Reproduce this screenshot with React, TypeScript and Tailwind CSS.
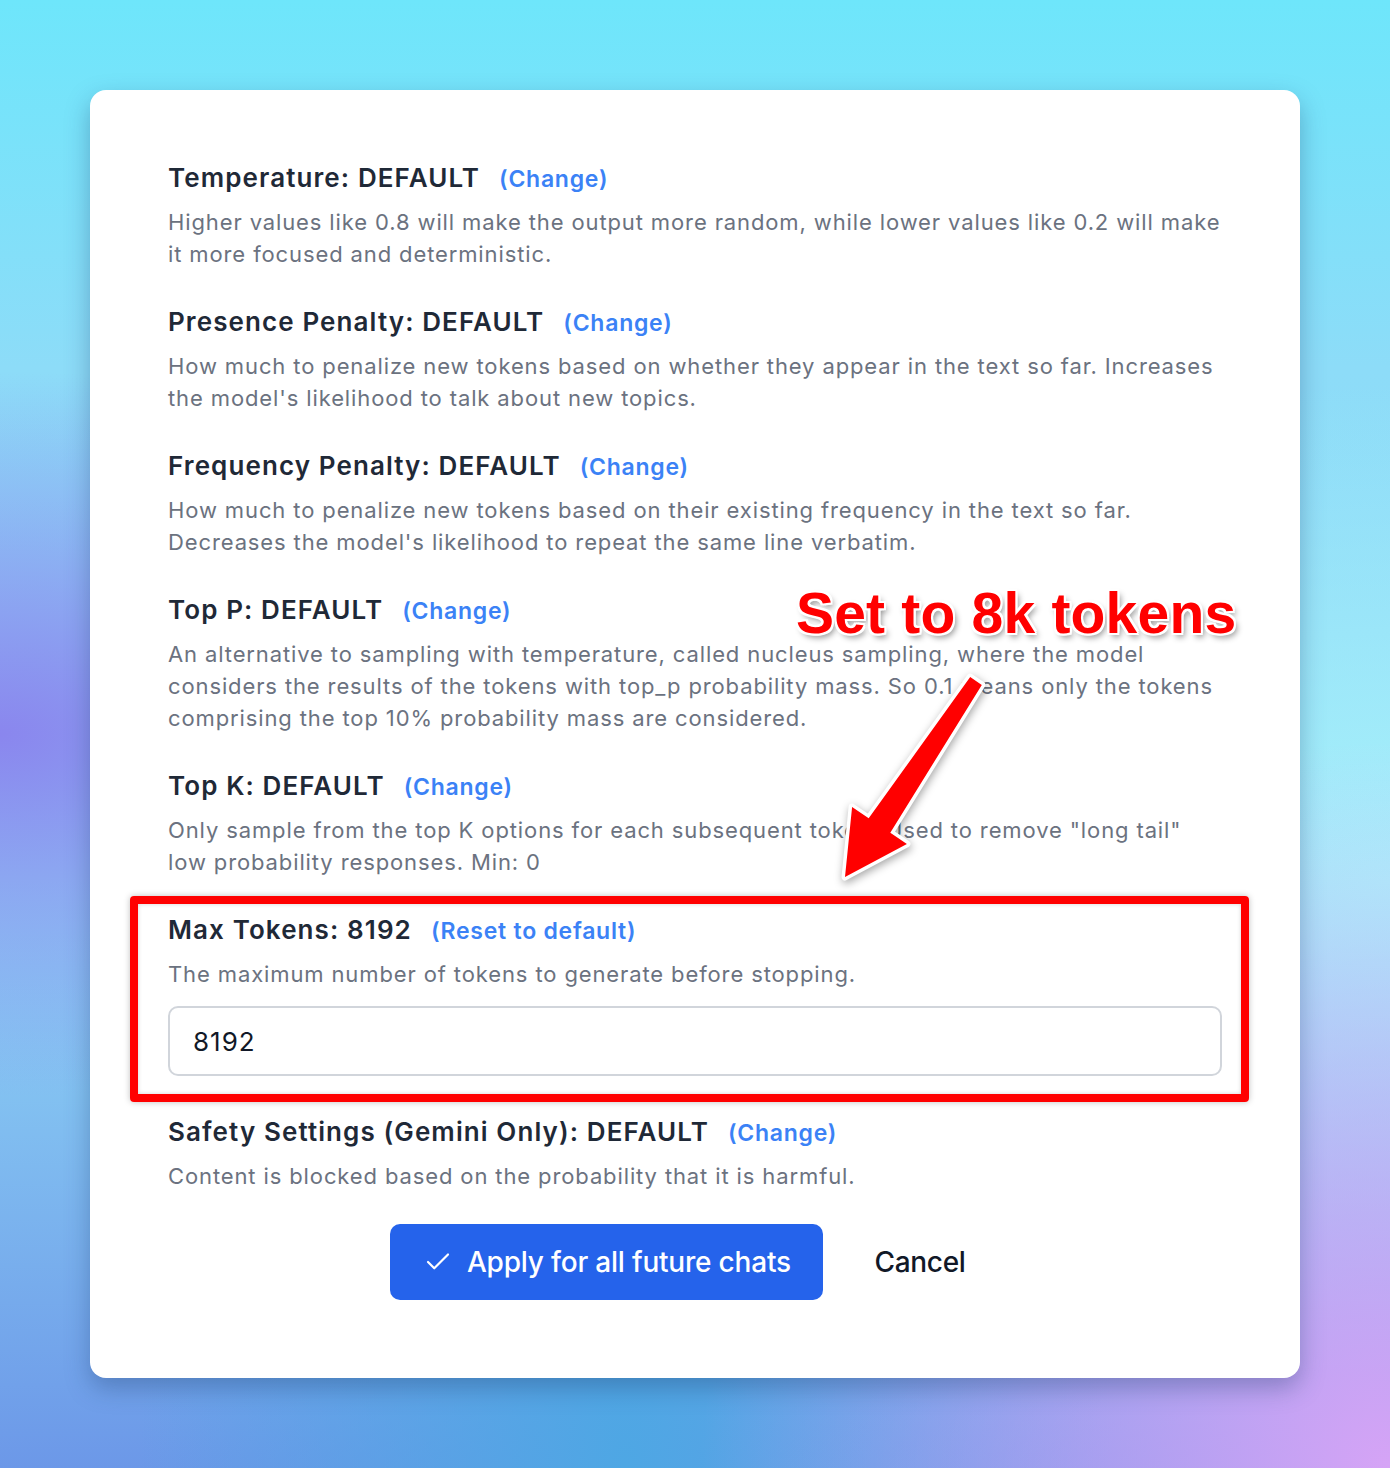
import React from 'react';
import { Check } from 'lucide-react';

type Param = {
  label: string;
  value: string;
  action: string;
  description: string;
};

const PARAMS: Param[] = [
  {
    label: 'Temperature',
    value: 'DEFAULT',
    action: '(Change)',
    description:
      'Higher values like 0.8 will make the output more random, while lower values like 0.2 will make it more focused and deterministic.',
  },
  {
    label: 'Presence Penalty',
    value: 'DEFAULT',
    action: '(Change)',
    description:
      "How much to penalize new tokens based on whether they appear in the text so far. Increases the model's likelihood to talk about new topics.",
  },
  {
    label: 'Frequency Penalty',
    value: 'DEFAULT',
    action: '(Change)',
    description:
      "How much to penalize new tokens based on their existing frequency in the text so far. Decreases the model's likelihood to repeat the same line verbatim.",
  },
  {
    label: 'Top P',
    value: 'DEFAULT',
    action: '(Change)',
    description:
      'An alternative to sampling with temperature, called nucleus sampling, where the model considers the results of the tokens with top_p probability mass. So 0.1 means only the tokens comprising the top 10% probability mass are considered.',
  },
  {
    label: 'Top K',
    value: 'DEFAULT',
    action: '(Change)',
    description:
      'Only sample from the top K options for each subsequent token. Used to remove "long tail" low probability responses. Min: 0',
  },
];

const Heading: React.FC<{ label: string; value: string; action: string }> = ({ label, value, action }) => (
  <div className="flex items-baseline gap-[19px] h-9 leading-9">
    <h3 className="text-[26px] font-semibold tracking-[1.1px] text-[#1f2937]">
      {label}: {value}
    </h3>
    <button className="text-[23px] font-semibold tracking-[0.75px] text-[#3b82f6]">{action}</button>
  </div>
);

const Description: React.FC<{ children: React.ReactNode }> = ({ children }) => (
  <p className="mt-2.5 text-[22px] leading-8 tracking-[0.88px] text-[#6b7280]">{children}</p>
);

// red arrow annotation, drawn in card coordinates
const Arrow: React.FC = () => (
  <svg
    className="pointer-events-none absolute inset-0 drop-shadow-[1px_3px_4px_rgba(0,0,0,0.35)]"
    width="1210"
    height="1288"
    viewBox="0 0 1210 1288"
  >
    <polygon
      points="891.8,594.9 800.3,742.7 816.9,753.9 755,787 762.1,717.1 778.7,728.3 880.2,587.1"
      fill="#ff0000"
      stroke="#ffffff"
      strokeWidth="7"
      strokeLinejoin="round"
      paintOrder="stroke"
    />
  </svg>
);

export default function App() {
  return (
    <div className="min-h-screen h-[1468px] w-full px-[90px] pt-[90px] font-['Inter','Noto_Sans',sans-serif] bg-[radial-gradient(ellipse_at_0%_50%,#8a86ee_0%,rgba(138,134,238,0)_35%),radial-gradient(ellipse_at_100%_100%,#d6a4f6_0%,rgba(214,164,246,0)_35%),radial-gradient(ellipse_at_100%_60%,#a8f2fb_0%,rgba(168,242,251,0)_40%),radial-gradient(ellipse_at_45%_100%,#4ea7e4_0%,rgba(78,167,228,0)_45%),linear-gradient(180deg,#6ee6fb_0%,#8ddcf8_25%,#8fd8f6_60%,#6c98e8_100%)]">
      <div className="relative w-[1210px] rounded-2xl bg-white px-[78px] pt-[70px] pb-[78px] shadow-[0_10px_25px_rgba(30,60,110,0.35)]">
        <div className="flex flex-col gap-[34px]">
          {PARAMS.map((p) => (
            <section key={p.label}>
              <Heading label={p.label} value={p.value} action={p.action} />
              <Description>{p.description}</Description>
            </section>
          ))}

          <section className="relative">
            <Heading label="Max Tokens" value="8192" action="(Reset to default)" />
            <Description>The maximum number of tokens to generate before stopping.</Description>
            <input
              readOnly
              value="8192"
              className="mt-4 block h-[70px] w-full rounded-[10px] border-2 border-[#d1d5db] bg-white px-[23px] text-[26px] tracking-[1px] text-[#111827] outline-none"
            />
            {/* annotation box */}
            <div className="pointer-events-none absolute -left-[38px] -right-[27px] -top-4 -bottom-[26px] rounded-[4px] border-[8px] border-[#ff0000] shadow-[inset_0_0_4px_rgba(0,0,0,0.18),0_0_6px_rgba(0,0,0,0.25)]" />
          </section>
        </div>

        <section className="mt-[38px]">
          <Heading label="Safety Settings (Gemini Only)" value="DEFAULT" action="(Change)" />
          <Description>Content is blocked based on the probability that it is harmful.</Description>
        </section>

        <div className="mt-8 flex items-center justify-center gap-[17px]">
          <button className="flex h-[76px] w-[433px] items-center justify-center gap-[14px] rounded-[10px] bg-[#2563eb] text-[28px] font-medium tracking-[-0.2px] text-white">
            <Check size={30} strokeWidth={1.75} />
            Apply for all future chats
          </button>
          <button className="h-[76px] px-[34px] text-[28px] font-medium tracking-[-0.3px] text-[#111827]">Cancel</button>
        </div>

        <Arrow />
        <div className="pointer-events-none absolute left-[706px] top-[495px] whitespace-nowrap font-['Liberation_Sans',Arial,sans-serif] text-[57px] font-bold leading-none tracking-[0.2px] text-[#ff0000] [text-shadow:0_0_2px_#fff,2px_0_0_#fff,-2px_0_0_#fff,0_2px_0_#fff,0_-2px_0_#fff,2px_2px_0_#fff,-2px_-2px_0_#fff,2px_-2px_0_#fff,-2px_2px_0_#fff,3px_4px_6px_rgba(0,0,0,0.45)]">
          Set to 8k tokens
        </div>
      </div>
    </div>
  );
}
